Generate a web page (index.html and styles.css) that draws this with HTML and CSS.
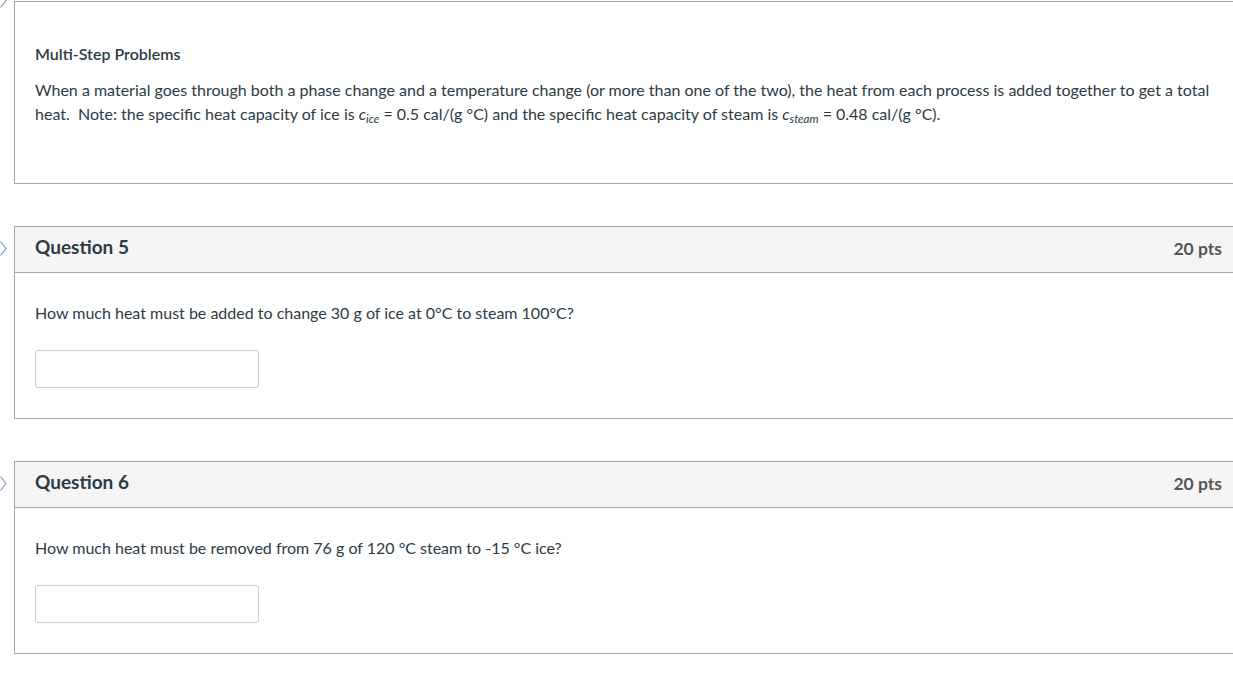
FILE: index.html
```html
<!DOCTYPE html>
<html>
<head>
<meta charset="utf-8">
<link rel="stylesheet" href="styles.css">
</head>
<body>
<div class="quiz">
  <div class="box intro">
    <svg class="chev chev-top" width="7" height="15" viewBox="0 0 7 15"><polyline points="0.5,0.5 6,7.5 0.5,14.5" fill="none" stroke="#7d9cc0" stroke-width="1.2"/></svg>
    <div class="intro-body">
      <p class="title">Multi-Step Problems</p>
      <p class="text">When a material goes through both a phase change and a temperature change (or more than one of the two), the heat from each process is added together to get a total heat.&nbsp; Note: the specific heat capacity of ice is <i>c<sub>ice</sub></i> = 0.5 cal/(g °C) and the specific heat capacity of steam is <i>c<sub>steam</sub></i> = 0.48 cal/(g °C).</p>
    </div>
  </div>

  <div class="box question">
    <svg class="chev chev-q" width="7" height="15" viewBox="0 0 7 15"><polyline points="0.5,0.5 6,7.5 0.5,14.5" fill="none" stroke="#7d9cc0" stroke-width="1.2"/></svg>
    <div class="qhead">
      <span class="qname">Question 5</span>
      <span class="pts">20 pts</span>
    </div>
    <div class="qbody">
      <p class="text">How much heat must be added to change 30 g of ice at 0°C to steam 100°C?</p>
      <input class="answer" type="text">
    </div>
  </div>

  <div class="box question">
    <svg class="chev chev-q" width="7" height="15" viewBox="0 0 7 15"><polyline points="0.5,0.5 6,7.5 0.5,14.5" fill="none" stroke="#7d9cc0" stroke-width="1.2"/></svg>
    <div class="qhead">
      <span class="qname">Question 6</span>
      <span class="pts">20 pts</span>
    </div>
    <div class="qbody">
      <p class="text">How much heat must be removed from 76 g of 120 °C steam to -15 °C ice?</p>
      <input class="answer" type="text">
    </div>
  </div>
</div>
</body>
</html>
```

FILE: styles.css
```css
html, body {
  margin: 0;
  padding: 0;
  background: #ffffff;
  overflow: hidden;
}
body {
  font-family: Lato, "Open Sans", sans-serif;
  color: #2d3b45;
}
.quiz {
  padding: 1px 0 0 14px;
  display: flex;
  flex-direction: column;
  gap: 42px;
}
.box {
  position: relative;
  width: 1229px;
  box-sizing: border-box;
  border: 1px solid #a8a8a8;
  background: #fff;
}
.chev {
  position: absolute;
  left: -15px;
}
.chev-top { top: -9px; }
.chev-q { top: 14px; }
.intro-body {
  padding: 42px 20px 57px;
}
.title {
  margin: 0;
  font-size: 16px;
  line-height: 20px;
  font-weight: 600;
}
.text {
  margin: 0;
  font-size: 16px;
  line-height: 24px;
}
.intro-body .text { margin-top: 14px; }
.text i { font-style: italic; }
.text sub {
  font-size: 11.5px;
  line-height: 0;
  vertical-align: -3px;
}
.qhead {
  display: flex;
  justify-content: space-between;
  align-items: center;
  height: 45px;
  padding: 0 20px;
  background: #f5f5f5;
  border-bottom: 1px solid #a8a8a8;
}
.qname {
  font-size: 19px;
  line-height: 24px;
  font-weight: 700;
  margin-bottom: 5px;
}
.pts {
  font-size: 17.5px;
  line-height: 22px;
  font-weight: 700;
  color: #555;
  margin-bottom: 2px;
}
.qbody {
  padding: 28px 20px 30px;
  display: flex;
  flex-direction: column;
  align-items: flex-start;
  gap: 25px;
}
.answer {
  width: 224px;
  height: 38px;
  box-sizing: border-box;
  border: 1px solid #c7cdd1;
  border-radius: 3px;
  background: #fff;
  margin: 0;
}
```
